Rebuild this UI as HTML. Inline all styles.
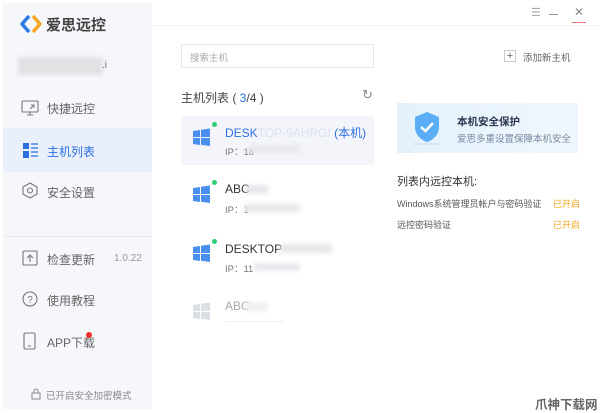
<!DOCTYPE html>
<html><head><meta charset="utf-8"><style>
*{margin:0;padding:0;box-sizing:border-box}
body{width:600px;height:412px;background:#fff;font-family:"Liberation Sans","Noto Sans CJK SC",sans-serif;position:relative;overflow:hidden;color:#333}
.a{position:absolute;white-space:nowrap}
.side{position:absolute;left:3px;top:3px;width:149px;height:406px;background:#f5f7fb}
.nav{font-size:12px;color:#666}
.blur{position:absolute;background:#e8e8ec;filter:blur(2px)}
</style></head><body>
<div class="side"></div>
<svg class="a" style="left:20px;top:14px" width="22" height="20" viewBox="0 0 22 20"><path d="M9 2 L2 10 L9 18" stroke="#2c7be5" stroke-width="3.5" fill="none" stroke-linejoin="round"/><path d="M13 2 L20 10 L13 18" stroke="#f5a623" stroke-width="3.5" fill="none" stroke-linejoin="round"/></svg>
<div class="a" style="left:46px;top:14px;font-size:15px;font-weight:bold;color:#444">爱思远控</div>
<div class="blur" style="left:18px;top:57px;width:85px;height:18px;background:#e2e2e4"></div>
<div class="a" style="left:102px;top:60px;font-size:10px;color:#666">.i</div>
<svg class="a" style="left:21px;top:100px" width="18" height="16" viewBox="0 0 18 16"><rect x="1" y="1" width="16" height="11" rx="1" fill="none" stroke="#777" stroke-width="1.1"/><path d="M6 15h6M9 12v3" stroke="#777" stroke-width="1.1"/><path d="M9 9l4-4M10 5h3v3" stroke="#777" stroke-width="1" fill="none"/></svg>
<div class="a nav" style="left:47px;top:100px">快捷远控</div>
<div class="a" style="left:3px;top:128px;width:149px;height:44px;background:#e9effb"></div>
<svg class="a" style="left:23px;top:143px" width="15" height="15" viewBox="0 0 15 15"><rect x="0" y="0" width="6" height="6" fill="#2c6fe0"/><rect x="0" y="8" width="6" height="7" fill="#2c6fe0"/><path d="M8 1h7M8 5h7M8 9h7M8 13h7" stroke="#2c6fe0" stroke-width="1.2"/></svg>
<div class="a nav" style="left:47px;top:143px;color:#2c6fe0">主机列表</div>
<svg class="a" style="left:22px;top:182px" width="16" height="17" viewBox="0 0 16 17"><path d="M8 1l7 4v7l-7 4-7-4V5z" fill="none" stroke="#777" stroke-width="1.1"/><circle cx="8" cy="8.5" r="2.5" fill="none" stroke="#777" stroke-width="1.1"/></svg>
<div class="a nav" style="left:47px;top:184px">安全设置</div>
<div class="a" style="left:3px;top:236px;width:149px;height:1px;background:#e8eaef"></div>
<svg class="a" style="left:22px;top:250px" width="16" height="16" viewBox="0 0 16 16"><rect x="1" y="1" width="14" height="14" rx="1" fill="none" stroke="#777" stroke-width="1.1"/><path d="M8 12V5M5 8l3-3 3 3" stroke="#777" stroke-width="1.1" fill="none"/></svg>
<div class="a nav" style="left:47px;top:251px">检查更新</div>
<div class="a" style="left:114px;top:253px;font-size:10px;color:#999">1.0.22</div>
<svg class="a" style="left:22px;top:291px" width="16" height="16" viewBox="0 0 16 16"><circle cx="8" cy="8" r="7" fill="none" stroke="#777" stroke-width="1.1"/><text x="8" y="12" font-size="10" text-anchor="middle" fill="#777" font-family="Liberation Sans">?</text></svg>
<div class="a nav" style="left:47px;top:292px">使用教程</div>
<svg class="a" style="left:23px;top:332px" width="13" height="18" viewBox="0 0 13 18"><rect x="1" y="1" width="11" height="16" rx="1.5" fill="none" stroke="#777" stroke-width="1.1"/><path d="M5 14h3" stroke="#777"/></svg>
<div class="a nav" style="left:47px;top:334px">APP下载</div>
<div class="a" style="left:86px;top:332px;width:6px;height:6px;border-radius:50%;background:#f0302b"></div>
<svg class="a" style="left:31px;top:388px" width="10" height="12" viewBox="0 0 10 12"><rect x="1" y="5" width="8" height="6" fill="none" stroke="#888"/><path d="M3 5V3a2 2 0 0 1 4 0v2" fill="none" stroke="#888"/></svg>
<div class="a" style="left:46px;top:388px;font-size:9.5px;color:#888">已开启安全加密模式</div>
<div class="a" style="left:152px;top:25px;width:448px;height:1px;background:#f2f2f5"></div>
<div class="a" style="left:531px;top:6px;font-size:11px;color:#aaa">☰</div>
<div class="a" style="left:549px;top:14px;width:9px;height:1px;background:#999"></div>
<div class="a" style="left:574px;top:5px;font-size:12px;color:#888">✕</div>
<div class="a" style="left:572px;top:22px;width:14px;height:1px;background:#e77"></div>
<div class="a" style="left:181px;top:44px;width:193px;height:24px;border:1px solid #e3e5ea;border-radius:2px"></div>
<div class="a" style="left:190px;top:50px;font-size:9.5px;color:#aaa">搜索主机</div>
<div class="a" style="left:504px;top:50px;width:12px;height:12px;border:1px solid #ccc;font-size:11px;line-height:10px;text-align:center;color:#666">+</div>
<div class="a" style="left:523px;top:50px;font-size:9.5px;color:#666">添加新主机</div>
<div class="a" style="left:181px;top:89px;font-size:12px;color:#444">主机列表 ( <span style="color:#2c6fe0">3</span>/4 )</div>
<div class="a" style="left:362px;top:87px;font-size:13px;color:#888">↻</div>
<div class="a" style="left:181px;top:116px;width:193px;height:49px;background:#f3f5fa;border-radius:3px"></div>
<svg class="a" style="left:193px;top:128px" width="17" height="18" viewBox="0 0 17 18"><path d="M0 3l7-1v7H0zM8 1.8l9-1.3V9H8zM0 10h7v7l-7-1zM8 10h9v8l-9-1.3z" fill="#4a8ef0"/></svg>
<div class="a" style="left:212px;top:122px;width:5px;height:5px;border-radius:50%;background:#2dcc70"></div>
<div class="a" style="left:225px;top:124px;font-size:12px;color:#2c6fe0">DESK<span style="color:#d8e1f3">TOP-9AHRGI</span> (本机)</div>
<div class="a" style="left:225px;top:144px;font-size:9.5px;color:#777">IP：18</div>
<div class="blur" style="left:248px;top:145px;width:52px;height:8px"></div>
<svg class="a" style="left:193px;top:185px" width="17" height="18" viewBox="0 0 17 18"><path d="M0 3l7-1v7H0zM8 1.8l9-1.3V9H8zM0 10h7v7l-7-1zM8 10h9v8l-9-1.3z" fill="#4a8ef0"/></svg>
<div class="a" style="left:212px;top:180px;width:5px;height:5px;border-radius:50%;background:#2dcc70"></div>
<div class="a" style="left:225px;top:182px;font-size:12px;color:#333">ABC</div>
<div class="blur" style="left:246px;top:185px;width:22px;height:9px"></div>
<div class="a" style="left:225px;top:202px;font-size:9.5px;color:#777">IP：1</div>
<div class="blur" style="left:244px;top:204px;width:56px;height:8px"></div>
<svg class="a" style="left:193px;top:244px" width="17" height="18" viewBox="0 0 17 18"><path d="M0 3l7-1v7H0zM8 1.8l9-1.3V9H8zM0 10h7v7l-7-1zM8 10h9v8l-9-1.3z" fill="#4a8ef0"/></svg>
<div class="a" style="left:212px;top:239px;width:5px;height:5px;border-radius:50%;background:#2dcc70"></div>
<div class="a" style="left:225px;top:242px;font-size:12px;color:#333">DESKTOP</div>
<div class="blur" style="left:280px;top:244px;width:52px;height:9px"></div>
<div class="a" style="left:225px;top:261px;font-size:9.5px;color:#777">IP：11</div>
<div class="blur" style="left:254px;top:263px;width:46px;height:8px"></div>
<svg class="a" style="left:193px;top:302px" width="17" height="18" viewBox="0 0 17 18"><path d="M0 3l7-1v7H0zM8 1.8l9-1.3V9H8zM0 10h7v7l-7-1zM8 10h9v8l-9-1.3z" fill="#dcdfe6"/></svg>
<div class="a" style="left:225px;top:299px;font-size:12px;color:#aaa">ABC</div>
<div class="blur" style="left:246px;top:302px;width:22px;height:9px;background:#f0f0f2"></div>
<div class="a" style="left:225px;top:321px;width:58px;height:1px;background:#eee"></div>
<div class="a" style="left:397px;top:103px;width:181px;height:50px;background:linear-gradient(90deg,#e4f1fc,#f0f6fd)"></div>
<svg class="a" style="left:412px;top:111px" width="30" height="35" viewBox="0 0 30 35"><path d="M15 1l12 5v10c0 8-6 13-12 15C9 29 3 24 3 16V6z" fill="#5aaef5"/><path d="M9 16l4.5 4 7.5-8" stroke="#fff" stroke-width="2.5" fill="none"/><path d="M1 33h28" stroke="#cfe2f6" stroke-width="1.5"/></svg>
<div class="a" style="left:457px;top:114px;font-size:10.5px;font-weight:bold;color:#2a3550">本机安全保护</div>
<div class="a" style="left:457px;top:131px;font-size:9.5px;color:#7a8aa3">爱思多重设置保障本机安全</div>
<div class="a" style="left:397px;top:173px;font-size:11px;color:#333">列表内远控本机:</div>
<div class="a" style="left:397px;top:197px;font-size:9px;color:#555">Windows系统管理员帐户与密码验证</div>
<div class="a" style="left:553px;top:197px;font-size:9px;color:#f5a623">已开启</div>
<div class="a" style="left:397px;top:218px;font-size:9px;color:#555">远控密码验证</div>
<div class="a" style="left:553px;top:218px;font-size:9px;color:#f5a623">已开启</div>
<div class="a" style="left:535px;top:394px;font-size:12.5px;font-weight:bold;color:#666">爪神下载网</div>
</body></html>
